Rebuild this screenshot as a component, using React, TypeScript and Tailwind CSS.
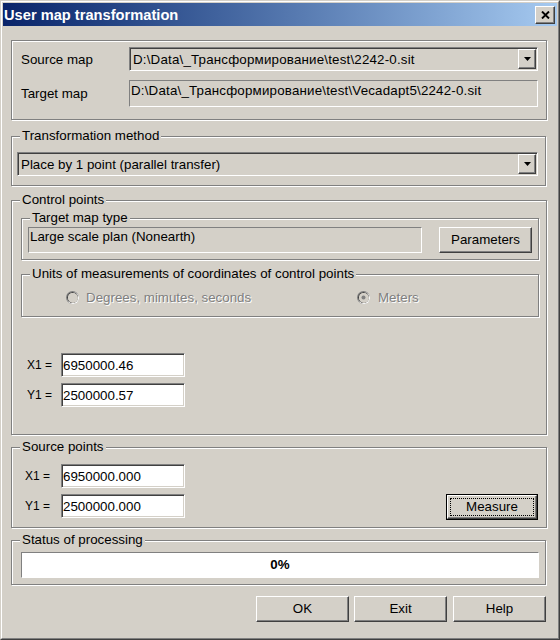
import React from "react";

const sunken2 =
  "border border-t-[#808080] border-l-[#808080] border-b-white border-r-white shadow-[inset_1px_1px_0_#404040,inset_-1px_-1px_0_#d4d0c8]";
const raised =
  "border border-t-white border-l-white border-b-[#404040] border-r-[#404040] shadow-[inset_-1px_-1px_0_#808080,inset_1px_1px_0_#d4d0c8]";
const etched = "border border-[#808080] shadow-[1px_1px_0_#ffffff,inset_1px_1px_0_#ffffff]";
const static1 = "border border-t-[#808080] border-l-[#808080] border-b-white border-r-white";

function Legend({ children }: { children: React.ReactNode }) {
  return (
    <div className="self-start ml-[8px] -mt-[8px] h-[14px] px-[2px] bg-[#d4d0c8] leading-[14px] whitespace-nowrap">
      {children}
    </div>
  );
}

function Arrow() {
  return (
    <svg width="7" height="4" viewBox="0 0 7 4">
      <path d="M0 0H7L3.5 4Z" fill="#000" />
    </svg>
  );
}

function Combo({ text, className, textClass }: { text: string; className: string; textClass?: string }) {
  return (
    <div className={`flex h-[24px] bg-[#d4d0c8] ${sunken2} p-[1px] ${className}`}>
      <div className={`flex-1 flex items-center pl-[2px] pt-[1px] leading-[15px] whitespace-nowrap overflow-hidden ${textClass ?? ""}`}>
        {text}
      </div>
      <div className={`w-[18px] flex items-center justify-center ${raised}`}>
        <Arrow />
      </div>
    </div>
  );
}

function Button({ label, className }: { label: string; className: string }) {
  return (
    <div className={`h-[26px] w-[93px] flex items-center justify-center bg-[#d4d0c8] ${raised} ${className}`}>{label}</div>
  );
}

function Edit({ value }: { value: string }) {
  return (
    <div className={`w-[124px] h-[24px] bg-white ${sunken2} flex items-center pl-[1px] leading-[15px]`}>{value}</div>
  );
}

function Radio({ checked }: { checked: boolean }) {
  return (
    <svg width="13" height="13" viewBox="0 0 13 13" className="shrink-0">
      <circle cx="6.5" cy="6.5" r="6.5" fill="#808080" />
      <circle cx="7" cy="7" r="6" fill="#ffffff" />
      <circle cx="6.5" cy="6.5" r="5.5" fill="#404040" />
      <circle cx="7" cy="7" r="5" fill="#d4d0c8" />
      <circle cx="6.5" cy="6.5" r="4.5" fill="#d4d0c8" />
      {checked && <circle cx="6.5" cy="6.5" r="2" fill="#808080" />}
    </svg>
  );
}

export default function App() {
  return (
    <div className="w-[560px] h-[640px] bg-[#d4d0c8] border border-t-[#d4d0c8] border-l-[#d4d0c8] border-b-[#404040] border-r-[#404040] font-['Liberation_Sans',Arial,sans-serif] text-[13.33px] text-black">
      <div className="w-full h-full border border-t-white border-l-white border-b-[#808080] border-r-[#808080] p-[1px] flex flex-col">
        {/* Title bar */}
        <div className="h-[23px] shrink-0 flex items-center bg-linear-to-r from-[#0a246a] to-[#a6caf0]">
          <div className="ml-[1px] text-white font-bold text-[14.67px] leading-[18px] whitespace-nowrap">User map transformation</div>
          <div className={`ml-auto mr-[2px] w-[20px] h-[18px] flex items-center justify-center bg-[#d4d0c8] ${raised}`}>
            <svg width="9" height="8" viewBox="0 0 9 8">
              <path d="M1 0.5L8 7.5M8 0.5L1 7.5" stroke="#000" strokeWidth="1.9" />
            </svg>
          </div>
        </div>

        {/* Content */}
        <div className="flex flex-col pl-[8px]">
          {/* Group 1 */}
          <div className={`mt-[14px] w-[536px] h-[80px] ${etched} flex flex-col pl-[9px] pt-[6px]`}>
            <div className="flex items-center h-[24px]">
              <div className="w-[108px] pt-[1px]">Source map</div>
              <Combo
                text="D:\Data\_Трансформирование\test\2242-0.sit"
                className="w-[409px]"
                textClass="tracking-[0.19px]"
              />
            </div>
            <div className="flex items-center h-[27px] mt-[9px]">
              <div className="w-[108px]">Target map</div>
              <div className={`w-[409px] h-[27px] ${static1} pl-[1px] pt-[2px] leading-[15px] whitespace-nowrap tracking-[0.19px]`}>
                D:\Data\_Трансформирование\test\Vecadapt5\2242-0.sit
              </div>
            </div>
          </div>

          {/* Group 2 */}
          <div className={`mt-[16px] w-[535px] h-[50px] ${etched} flex flex-col`}>
            <Legend>Transformation method</Legend>
            <Combo text="Place by 1 point (parallel transfer)" className="ml-[5px] mt-[9px] w-[521px]" />
          </div>

          {/* Group 3 */}
          <div className={`mt-[14px] w-[536px] h-[235px] ${etched} flex flex-col`}>
            <Legend>Control points</Legend>
            <div className={`mt-[11px] ml-[9px] w-[518px] h-[42px] ${etched} flex flex-col`}>
              <Legend>Target map type</Legend>
              <div className="flex mt-[2px] ml-[6px]">
                <div className={`w-[394px] h-[26px] ${static1} pl-[1px] pt-[1px] leading-[15px]`}>
                  Large scale plan (Nonearth)
                </div>
                <Button label="Parameters" className="ml-[17px]" />
              </div>
            </div>
            <div className={`mt-[14px] ml-[9px] w-[518px] h-[43px] ${etched} flex flex-col`}>
              <Legend>Units of measurements of coordinates of control points</Legend>
              <div className="flex items-center mt-[10px] h-[13px] ml-[44px] text-[#808080] [text-shadow:1px_1px_0_#ffffff]">
                <div className="w-[291px] flex items-center">
                  <Radio checked={false} />
                  <span className="ml-[7px] leading-[15px]">Degrees, mimutes, seconds</span>
                </div>
                <div className="flex items-center">
                  <Radio checked={true} />
                  <span className="ml-[8px] leading-[15px]">Meters</span>
                </div>
              </div>
            </div>
            <div className="flex items-center mt-[36px] ml-[15px]">
              <div className="w-[34px] text-[12px]">X1 =</div>
              <Edit value="6950000.46" />
            </div>
            <div className="flex items-center mt-[6px] ml-[15px]">
              <div className="w-[34px] text-[12px]">Y1 =</div>
              <Edit value="2500000.57" />
            </div>
          </div>

          {/* Group 4 */}
          <div className={`mt-[12px] w-[536px] h-[81px] ${etched} flex flex-col`}>
            <Legend>Source points</Legend>
            <div className="flex items-center mt-[10px] ml-[13px]">
              <div className="w-[36px] text-[12px]">X1 =</div>
              <Edit value="6950000.000" />
            </div>
            <div className="flex items-start mt-[6px] ml-[13px]">
              <div className="w-[36px] h-[24px] flex items-center text-[12px]">Y1 =</div>
              <Edit value="2500000.000" />
              <div className="ml-auto mr-[8px] w-[92px] h-[26px] border border-black flex">
                <div className={`flex-1 flex p-[2px] ${raised}`}>
                  <div className="flex-1 border border-dotted border-black flex items-center justify-center">Measure</div>
                </div>
              </div>
            </div>
          </div>

          {/* Group 5 */}
          <div className={`mt-[12px] w-[535px] h-[45px] ${etched} flex flex-col`}>
            <Legend>Status of processing</Legend>
            <div className={`mt-[5px] ml-[9px] w-[518px] h-[26px] bg-white ${static1} flex items-center justify-center font-bold`}>
              0%
            </div>
          </div>

          {/* Buttons */}
          <div className="mt-[11px] w-[535px] flex justify-end">
            <Button label="OK" className="" />
            <Button label="Exit" className="ml-[5px]" />
            <Button label="Help" className="ml-[6px]" />
          </div>
        </div>
      </div>
    </div>
  );
}
